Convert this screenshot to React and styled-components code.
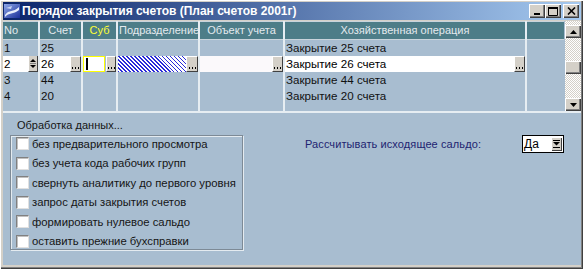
import React from "react";
import styled, { createGlobalStyle } from "styled-components";

const Global = createGlobalStyle`
  html, body { margin: 0; padding: 0; background: #d4d0c8; }
  body { font-family: "Liberation Sans", Arial, sans-serif; }
  * { box-sizing: border-box; }
`;

const Window = styled.div`
  width: 583px;
  height: 269px;
  padding: 2px 2px 4px 3px;
  background: #d4d0c8;
  box-shadow: inset 1px 1px 0 #ffffff, inset -1px -1px 0 #404040, inset -2px -2px 0 #808080;
  display: flex;
  flex-direction: column;
`;

const TitleBar = styled.div`
  height: 18px;
  margin-bottom: 1px;
  background: linear-gradient(to right, #0a246a, #a6caf0);
  display: flex;
  align-items: center;
  padding: 0 2px 0 1px;
`;

const TitleText = styled.span`
  color: #ffffff;
  font-weight: bold;
  font-size: 12px;
  margin-left: 2px;
  white-space: nowrap;
`;

const TitleButtons = styled.div`
  margin-left: auto;
  display: flex;
  align-items: center;
`;

const CaptionButton = styled.div`
  width: 16px;
  height: 14px;
  margin-left: ${(p) => (p.$gap ? 2 : 0)}px;
  background: #d4d0c8;
  box-shadow: inset 1px 1px 0 #ffffff, inset -1px -1px 0 #404040, inset -2px -2px 0 #808080;
  display: flex;
  align-items: center;
  justify-content: center;
`;

const Body = styled.div`
  flex: 1;
  background: #a8bdd0;
  display: flex;
  flex-direction: column;
`;

const GridArea = styled.div`
  height: 92px;
  display: flex;
  gap: 1px;
  border-bottom: 2px solid #e6edf2;
`;

const Table = styled.div`
  width: 561px;
  display: grid;
  grid-template-columns: 35px 41px 33px 80px 83px 240px 37px;
  grid-template-rows: 19px 16px 16px 16px 16px 1fr;
  column-gap: 2px;
  background: #e6edf2;
`;

const HeadCell = styled.div`
  background: #4d7d88;
  border-top: 1px solid #c9d4dc;
  border-bottom: 1px solid #c9d4dc;
  color: ${(p) => p.$color || "#e4eaee"};
  font-size: 11px;
  line-height: 17px;
  text-align: ${(p) => p.$align || "center"};
  padding-left: ${(p) => (p.$align === "left" ? 1 : 0)}px;
  white-space: nowrap;
  overflow: hidden;
`;

const Cell = styled.div`
  background: #a8bdd0;
  color: #111111;
  font-size: 11.6px;
  line-height: 16px;
  padding-left: 1px;
  white-space: nowrap;
  overflow: hidden;
`;

const EditCell = styled.div`
  background: #a8bdd0;
  display: flex;
  gap: ${(p) => p.$gap || 0}px;
  overflow: hidden;
`;

const Field = styled.div`
  flex: 1;
  height: 16px;
  font-size: 11.6px;
  line-height: 16px;
  color: #000;
  padding-left: 1px;
  white-space: nowrap;
  display: flex;
  align-items: center;
  background: ${(p) =>
    p.$variant === "hatch"
      ? "repeating-linear-gradient(45deg, #2a2ad8 0 1.1px, #ffffff 1.1px 2.8px)"
      : p.$variant === "dim"
      ? "#fbf9fb"
      : "#ffffff"};
  border: ${(p) => (p.$variant === "yellow" ? "1px solid #ffff00" : "none")};
`;

const Caret = styled.div`
  width: 2px;
  height: 12px;
  margin-left: 1px;
  background: #000000;
`;

const DotsButton = styled.div`
  width: ${(p) => p.$w || 11}px;
  height: 16px;
  flex: none;
  background: #d4d0c8;
  border-top: 1px solid #ffffff;
  border-left: 1px solid #ffffff;
  border-right: 1px solid #404040;
  border-bottom: 1px solid #404040;
  display: flex;
  align-items: flex-end;
  justify-content: center;
  padding-bottom: 2px;
`;

const SpinButton = styled.div`
  width: 10px;
  height: 16px;
  flex: none;
  background: #d4d0c8;
  border-left: 1px solid #ffffff;
  border-right: 1px solid #404040;
  border-bottom: 1px solid #404040;
  display: flex;
  align-items: center;
  justify-content: center;
`;

const Scrollbar = styled.div`
  width: 16px;
  display: flex;
  flex-direction: column;
  padding-top: 4px;
  background: repeating-conic-gradient(#ffffff 0 25%, #d4d0c8 0 50%) 0 0 / 2px 2px;
`;

const ScrollButton = styled.div`
  width: 16px;
  height: 13px;
  background: #d4d0c8;
  box-shadow: inset 1px 1px 0 #ffffff, inset -1px -1px 0 #404040, inset -2px -2px 0 #808080;
  display: flex;
  align-items: center;
  justify-content: center;
  margin-top: ${(p) => p.$offset || 0}px;
`;

const Spacer = styled.div`
  flex: 1;
`;

const Panel = styled.div`
  flex: 1;
  display: flex;
`;

const LeftCol = styled.div`
  margin-left: 7px;
  width: 233px;
  display: flex;
  flex-direction: column;
`;

const PanelTitle = styled.div`
  padding: 5px 0 0 7px;
  height: 22px;
  font-size: 11px;
  line-height: 14px;
  color: #151515;
`;

const Group = styled.div`
  border: 1px solid #7d8a96;
  box-shadow: inset 1px 1px 0 #e4ebf0, 1px 1px 0 #e4ebf0;
  padding: 1px 0 1px 5px;
  display: flex;
  flex-direction: column;
  gap: 6.6px;
`;

const CheckRow = styled.div`
  height: 13px;
  display: flex;
  align-items: center;
  gap: 3px;
  font-size: 11.3px;
  color: #151515;
  white-space: nowrap;
`;

const CheckBox = styled.div`
  width: 13px;
  height: 13px;
  flex: none;
  background: #ffffff;
  border: 1px solid;
  border-color: #808080 #e0e0e0 #e0e0e0 #808080;
  box-shadow: inset 1px 1px 0 #c0c0c0;
`;

const RightCol = styled.div`
  flex: 1;
  padding: 22px 17px 0 0;
  display: flex;
  align-items: flex-start;
`;

const SaldoLabel = styled.div`
  margin-left: 62px;
  font-size: 11px;
  letter-spacing: 0.1px;
  line-height: 18px;
  color: #1e2470;
  white-space: nowrap;
`;

const Combo = styled.div`
  margin-left: auto;
  width: 42px;
  height: 18px;
  background: #ffffff;
  border: 1px solid #000000;
  display: flex;
  align-items: center;
`;

const ComboText = styled.div`
  flex: 1;
  padding-left: 1px;
  font-size: 12px;
  color: #000;
`;

const ComboButton = styled.div`
  width: 11px;
  height: 14px;
  margin-right: 1px;
  background: #d4d0c8;
  box-shadow: inset 1px 1px 0 #ffffff, inset -1px -1px 0 #404040;
  display: flex;
  align-items: center;
  justify-content: center;
`;

const Dots = () => (
  <svg width="7" height="2" viewBox="0 0 7 2">
    <rect x="0" y="0" width="1" height="2" fill="#000" />
    <rect x="3" y="0" width="1" height="2" fill="#000" />
    <rect x="6" y="0" width="1" height="2" fill="#000" />
  </svg>
);

const AppIcon = () => (
  <svg width="16" height="16" viewBox="0 0 16 16">
    <defs>
      <linearGradient id="ig" x1="0" y1="0" x2="1" y2="1">
        <stop offset="0" stopColor="#8fa8e8" />
        <stop offset="1" stopColor="#1a2f9a" />
      </linearGradient>
    </defs>
    <rect x="0" y="1" width="16" height="14" fill="url(#ig)" />
    <path d="M1 12 C5 6, 9 10, 15 4 L15 7 C9 12, 5 9, 1 14 Z" fill="#e8eefc" />
    <path d="M2 5 L8 3 L7 6 Z" fill="#c8d4f4" />
  </svg>
);

const rows = [
  { no: "1", acc: "25", op: "Закрытие 25 счета" },
  null,
  { no: "3", acc: "44", op: "Закрытие 44 счета" },
  { no: "4", acc: "20", op: "Закрытие 20 счета" },
];

const options = [
  "без предварительного просмотра",
  "без учета кода рабочих групп",
  "свернуть аналитику до первого уровня",
  "запрос даты закрытия счетов",
  "формировать нулевое сальдо",
  "оставить прежние бухсправки",
];

const EditRow = () => (
  <>
    <EditCell>
      <Field>2</Field>
      <SpinButton>
        <svg width="6" height="11" viewBox="0 0 6 11">
          <path d="M0 4 L3 1 L6 4 Z" fill="#000" />
          <rect x="0" y="5" width="6" height="1" fill="#808080" />
          <path d="M0 7 L3 10 L6 7 Z" fill="#000" />
        </svg>
      </SpinButton>
    </EditCell>
    <EditCell>
      <Field>26</Field>
      <DotsButton><Dots /></DotsButton>
    </EditCell>
    <EditCell $gap={1}>
      <Field $variant="yellow"><Caret /></Field>
      <DotsButton $w={10}><Dots /></DotsButton>
    </EditCell>
    <EditCell>
      <Field $variant="hatch" />
      <DotsButton $w={12}><Dots /></DotsButton>
    </EditCell>
    <EditCell>
      <Field $variant="dim" />
      <DotsButton><Dots /></DotsButton>
    </EditCell>
    <EditCell>
      <Field>Закрытие 26 счета</Field>
      <DotsButton><Dots /></DotsButton>
    </EditCell>
    <Cell />
  </>
);

export default function App() {
  return (
    <>
      <Global />
      <Window>
        <TitleBar>
          <AppIcon />
          <TitleText>Порядок закрытия счетов (План счетов 2001г)</TitleText>
          <TitleButtons>
            <CaptionButton>
              <svg width="8" height="8" viewBox="0 0 8 8"><rect x="1" y="6" width="6" height="2" fill="#000" /></svg>
            </CaptionButton>
            <CaptionButton>
              <svg width="10" height="9" viewBox="0 0 10 9"><path d="M0.5 1.5 H9.5 V8.5 H0.5 Z" fill="none" stroke="#000" /><rect x="0" y="0" width="10" height="2" fill="#000" /></svg>
            </CaptionButton>
            <CaptionButton $gap>
              <svg width="9" height="8" viewBox="0 0 9 8"><path d="M1 0.5 L8 7.5 M8 0.5 L1 7.5" stroke="#000" strokeWidth="1.6" /></svg>
            </CaptionButton>
          </TitleButtons>
        </TitleBar>
        <Body>
          <GridArea>
            <Table>
              <HeadCell $align="left">No</HeadCell>
              <HeadCell>Счет</HeadCell>
              <HeadCell $color="#ffff33">Суб</HeadCell>
              <HeadCell $align="left">Подразделение</HeadCell>
              <HeadCell>Объект учета</HeadCell>
              <HeadCell>Хозяйственная операция</HeadCell>
              <HeadCell />
              {rows.map((r, i) =>
                r ? (
                  <React.Fragment key={i}>
                    <Cell>{r.no}</Cell>
                    <Cell>{r.acc}</Cell>
                    <Cell />
                    <Cell />
                    <Cell />
                    <Cell>{r.op}</Cell>
                    <Cell />
                  </React.Fragment>
                ) : (
                  <EditRow key={i} />
                )
              )}
              {Array.from({ length: 7 }).map((_, i) => (
                <Cell key={"f" + i} />
              ))}
            </Table>
            <Scrollbar>
              <ScrollButton>
                <svg width="7" height="4" viewBox="0 0 7 4"><path d="M0 4 L3.5 0 L7 4 Z" fill="#000" /></svg>
              </ScrollButton>
              <ScrollButton $offset={23} />
              <Spacer />
              <ScrollButton>
                <svg width="7" height="4" viewBox="0 0 7 4"><path d="M0 0 L3.5 4 L7 0 Z" fill="#000" /></svg>
              </ScrollButton>
            </Scrollbar>
          </GridArea>
          <Panel>
            <LeftCol>
              <PanelTitle>Обработка данных...</PanelTitle>
              <Group>
                {options.map((o) => (
                  <CheckRow key={o}>
                    <CheckBox />
                    {o}
                  </CheckRow>
                ))}
              </Group>
            </LeftCol>
            <RightCol>
              <SaldoLabel>Рассчитывать исходящее сальдо:</SaldoLabel>
              <Combo>
                <ComboText>Да</ComboText>
                <ComboButton>
                  <svg width="7" height="8" viewBox="0 0 7 8">
                    <rect x="0" y="0" width="7" height="1" fill="#000" />
                    <path d="M0 2 L3.5 5.5 L7 2 Z" fill="#000" />
                    <rect x="0" y="7" width="7" height="1" fill="#000" />
                  </svg>
                </ComboButton>
              </Combo>
            </RightCol>
          </Panel>
        </Body>
      </Window>
    </>
  );
}
